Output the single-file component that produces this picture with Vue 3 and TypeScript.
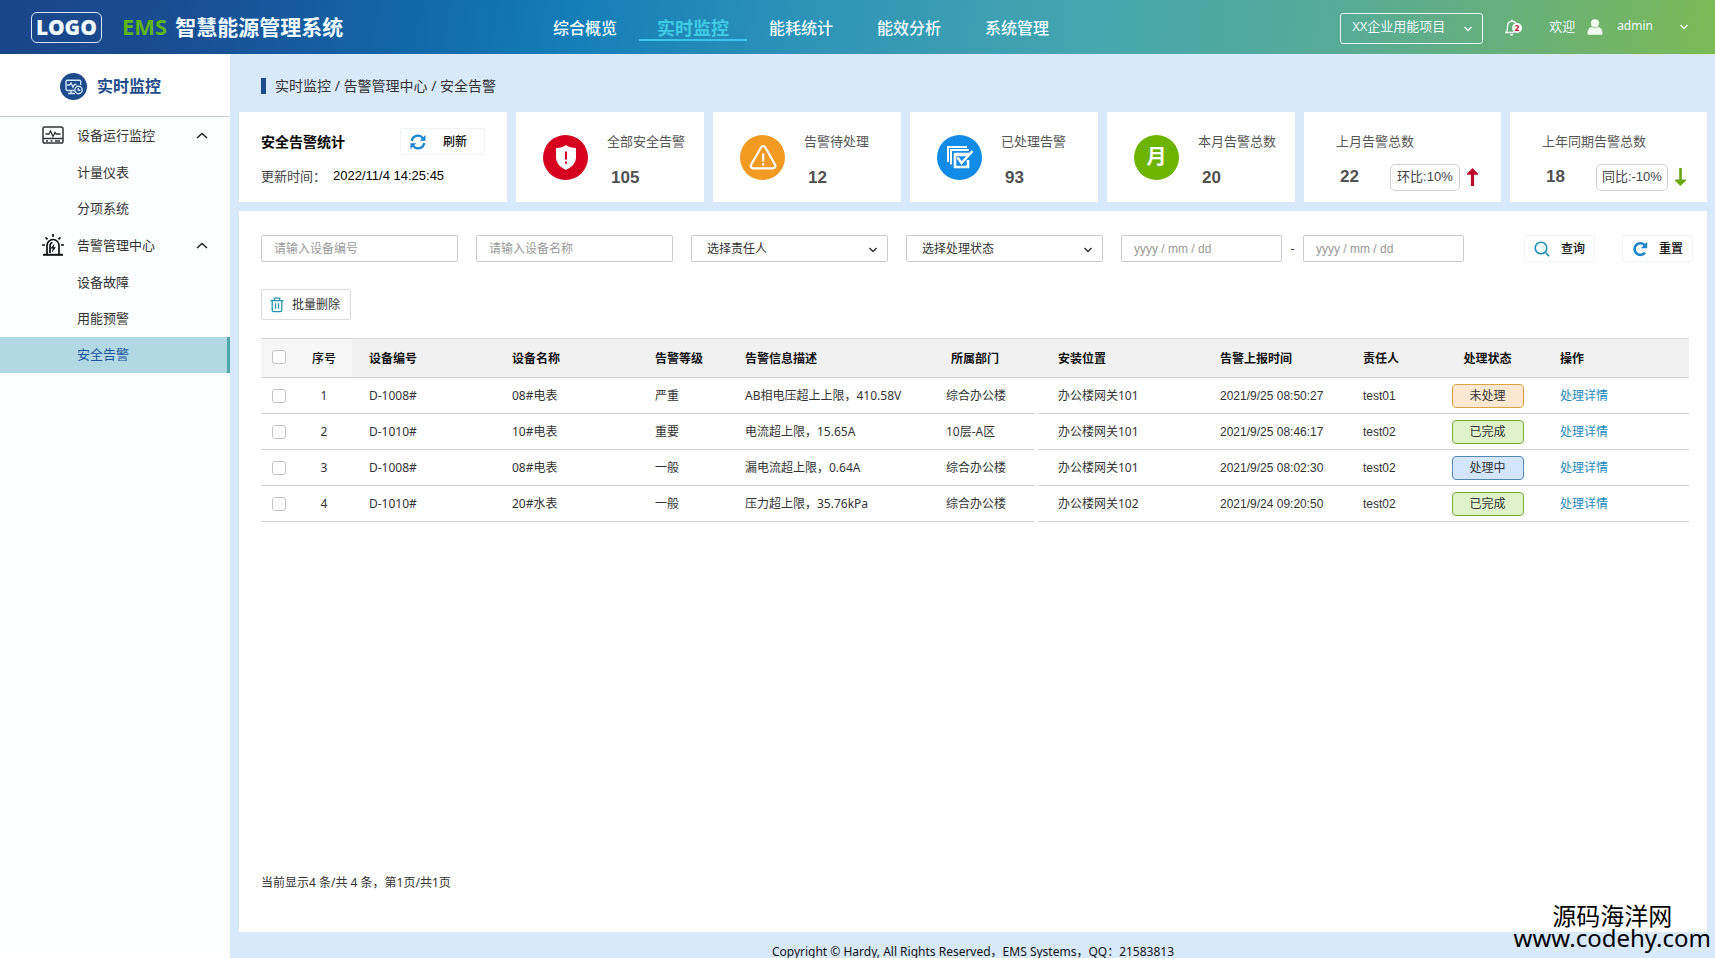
<script setup lang="ts">
import { ref, computed } from 'vue'

interface MenuGroup { key: string; title: string; items: string[] }
interface StatCard { icon: 'shield' | 'warn' | 'done' | 'month'; label: string; value: number; color: string }
interface CompareCard { label: string; value: number; tag: string; up: boolean }
interface AlarmRow {
  id: number; code: string; name: string; level: string; desc: string; dept: string
  place: string; time: string; owner: string; status: string; tone: 'pending' | 'done' | 'doing'
}

const navItems: string[] = ['综合概览', '实时监控', '能耗统计', '能效分析', '系统管理']
const activeNav = ref('实时监控')

const menu: MenuGroup[] = [
  { key: 'device', title: '设备运行监控', items: ['计量仪表', '分项系统'] },
  { key: 'alarm', title: '告警管理中心', items: ['设备故障', '用能预警', '安全告警'] },
]
const opened = ref<Record<string, boolean>>({ device: true, alarm: true })
const activeItem = ref('安全告警')

const stats: StatCard[] = [
  { icon: 'shield', label: '全部安全告警', value: 105, color: 'red' },
  { icon: 'warn', label: '告警待处理', value: 12, color: 'orange' },
  { icon: 'done', label: '已处理告警', value: 93, color: 'blue' },
  { icon: 'month', label: '本月告警总数', value: 20, color: 'green' },
]
const compares: CompareCard[] = [
  { label: '上月告警总数', value: 22, tag: '环比:10%', up: true },
  { label: '上年同期告警总数', value: 18, tag: '同比:-10%', up: false },
]

const rows: AlarmRow[] = [
  { id: 1, code: 'D-1008#', name: '08#电表', level: '严重', desc: 'AB相电压超上上限，410.58V', dept: '综合办公楼', place: '办公楼网关101', time: '2021/9/25 08:50:27', owner: 'test01', status: '未处理', tone: 'pending' },
  { id: 2, code: 'D-1010#', name: '10#电表', level: '重要', desc: '电流超上限，15.65A', dept: '10层-A区', place: '办公楼网关101', time: '2021/9/25 08:46:17', owner: 'test02', status: '已完成', tone: 'done' },
  { id: 3, code: 'D-1008#', name: '08#电表', level: '一般', desc: '漏电流超上限，0.64A', dept: '综合办公楼', place: '办公楼网关101', time: '2021/9/25 08:02:30', owner: 'test02', status: '处理中', tone: 'doing' },
  { id: 4, code: 'D-1010#', name: '20#水表', level: '一般', desc: '压力超上限，35.76kPa', dept: '综合办公楼', place: '办公楼网关102', time: '2021/9/24 09:20:50', owner: 'test02', status: '已完成', tone: 'done' },
]
const selected = ref<number[]>([])
const allSelected = computed<boolean>({
  get: () => selected.value.length === rows.length,
  set: (on) => { selected.value = on ? rows.map((r) => r.id) : [] },
})

const filters = ref({ code: '', name: '', owner: '', status: '', from: '', to: '' })
function resetFilters(): void {
  filters.value = { code: '', name: '', owner: '', status: '', from: '', to: '' }
}
</script>

<template>
  <div class="page">
    <header class="topbar">
      <div class="brand">
        <span class="logo">LOGO</span>
        <h1 class="brand-name"><span class="ems">EMS</span>智慧能源管理系统</h1>
      </div>
      <nav class="nav">
        <a v-for="n in navItems" :key="n" href="#" class="nav-link" :class="{ active: n === activeNav }" @click.prevent="activeNav = n">{{ n }}</a>
      </nav>
      <div class="tools">
        <div class="project">
          <select aria-label="项目">
            <option>XX企业用能项目</option>
          </select>
          <svg class="caret" viewBox="0 0 10 6"><path d="M1.500 1l3.500 3.500L8.500 1" /></svg>
        </div>
        <button type="button" class="bell" aria-label="通知">
          <svg viewBox="0 0 16 18"><path d="M1 14.500h9.500M2.500 14.500c1-1.500 1-3 1-6C3.500 5 5.300 3.300 8 3.300s4.500 1.700 4.500 5M8 3.300V1.500M6 16.800h3" /></svg>
          <span class="bell-count">2</span>
        </button>
        <span class="welcome">欢迎</span>
        <svg class="avatar" viewBox="0 0 16 16"><circle cx="8" cy="4.300" r="4.100" /><path d="M.5 14.500c0-4 2-6.300 4.700-6.500 1.700 1.200 3.900 1.200 5.600 0 2.700.2 4.700 2.500 4.700 6.500 0 .9-.7 1.300-1.500 1.300H2c-.8 0-1.500-.4-1.500-1.300z" /></svg>
        <button type="button" class="user">
          <span>admin</span>
          <svg class="user-caret" viewBox="0 0 10 6"><path d="M1.500 1l3.500 3.500L8.500 1" /></svg>
        </button>
      </div>
    </header>

    <div class="body">
      <aside class="side">
        <div class="side-head">
          <svg class="side-icon" viewBox="0 0 27 27">
            <circle cx="13.500" cy="13.500" r="13.500" fill="#1d4b8b" />
            <g fill="none" stroke="#cfe6fa" stroke-width="1.400">
              <path d="M14 17.500H7.500a1.500 1.500 0 0 1-1.500-1.500V8.700a1.500 1.500 0 0 1 1.500-1.500h11.700a1.500 1.500 0 0 1 1.500 1.500V12" />
              <path d="M6.500 12h3l1.500-2 2 4 1.500-2.500h2M8 20.500h7M11 17.500v3" />
              <circle cx="18.500" cy="17" r="3.700" /><path d="M18.300 15v2.300h2" />
            </g>
          </svg>
          <h2>实时监控</h2>
        </div>
        <div v-for="g in menu" :key="g.key">
          <button type="button" class="group" :aria-expanded="opened[g.key]" @click="opened[g.key] = !opened[g.key]">
            <svg v-if="g.key === 'device'" class="group-icon" viewBox="0 0 22 22">
              <g fill="none" stroke="#333" stroke-width="1.500">
                <rect x="1" y="3" width="20" height="16" rx="1.800" />
                <path d="M1 14.500h20" /><path d="M3.500 10H7l1.500-3 2.500 5.500 2-4L14.200 10h4.300" stroke-width="1.300" />
              </g>
              <path d="M4 16.200h2v1.600H4zM8.500 16.200h2v1.600h-2zM13 16.200h5v1.600h-5z" fill="#333" />
            </svg>
            <svg v-else class="group-icon" viewBox="0 0 22 22">
              <g fill="none" stroke="#111" stroke-width="1.700">
                <path d="M5 20V11.500a6 6 0 0 1 12 0V20M8 19v-7.500a3.200 3.200 0 0 1 2.500-3" /><path d="M1 20.800h20" stroke-width="2" />
                <path d="M11 0v3M3.500 3.300l2 2M18.500 3.300l-2 2M0 11h3M19 11h3" />
              </g>
              <path d="M12.500 9.500l-4 5h2.300l-1 4 4.200-5.300h-2.300z" fill="#111" />
            </svg>
            <span class="group-title">{{ g.title }}</span>
            <svg class="fold" :class="{ closed: !opened[g.key] }" viewBox="0 0 12 7"><path d="M1 6l5-4.500L11 6" /></svg>
          </button>
          <template v-if="opened[g.key]">
            <a v-for="it in g.items" :key="it" href="#" class="item" :class="{ current: it === activeItem }" @click.prevent="activeItem = it">{{ it }}</a>
          </template>
        </div>
      </aside>

      <main class="main">
        <div class="crumbs">实时监控 / 告警管理中心 / 安全告警</div>

        <section class="cards">
          <div class="card summary">
            <div class="summary-top">
              <h3>安全告警统计</h3>
              <button type="button" class="btn refresh">
                <svg viewBox="0 0 16 16" class="btn-icon"><g fill="none" stroke="#1a86d0" stroke-width="2.200"><path d="M1.800 7A6.200 6.200 0 0 1 13 4.300M14.200 9A6.200 6.200 0 0 1 3 11.700" /></g><path d="M15.500 1v5.800H9.700zM.5 15V9.200h5.800z" fill="#1a86d0" /></svg>
                <span>刷新</span>
              </button>
            </div>
            <div class="updated"><span>更新时间：</span><time>2022/11/4 14:25:45</time></div>
          </div>

          <div v-for="s in stats" :key="s.label" class="card stat">
            <span class="disc" :class="s.color">
              <svg v-if="s.icon === 'shield'" viewBox="0 0 44 44"><path d="M22 10c3 2.300 6 3 10 3v9c0 6-4 10-10 13-6-3-10-7-10-13v-9c4 0 7-.7 10-3z" fill="#fff" /><path d="M22 16.500v8M22 26.500v2.300" stroke="#d3001f" stroke-width="2" /></svg>
              <svg v-else-if="s.icon === 'warn'" viewBox="0 0 44 44"><g fill="none" stroke="#fff" stroke-width="2.200" stroke-linejoin="round"><path d="M20 12.500a2.500 2.500 0 0 1 4.400 0l9.700 17.200a2.500 2.500 0 0 1-2.200 3.700H12.300a2.500 2.500 0 0 1-2.200-3.700z" /><path d="M22.200 18.500v8M22.200 28.300v2.200" /></g></svg>
              <svg v-else-if="s.icon === 'done'" viewBox="0 0 44 44"><g fill="none" stroke="#fff" stroke-width="2"><path d="M10 27V12h19M13 29.500V15h18" /><path d="M17 29V18.500h14" stroke-width="1.500" /><path d="M31 20H17v12h13v-7" stroke-width="2.600" /><path d="M19.500 22.500l4 5.500L34.500 16" stroke-width="2.400" /></g></svg>
              <span v-else>月</span>
            </span>
            <div class="figures">
              <span class="label">{{ s.label }}</span>
              <strong>{{ s.value }}</strong>
            </div>
          </div>

          <div v-for="c in compares" :key="c.label" class="card compare">
            <div class="figures">
              <span class="label">{{ c.label }}</span>
              <div class="compare-row">
                <strong>{{ c.value }}</strong>
                <span class="ratio">{{ c.tag }}</span>
                <svg v-if="c.up" class="arrow" viewBox="0 0 11 18"><path d="M5.500 0L11 5.500v1.300H7.100V18H3.900V6.800H0V5.500z" fill="#bd0a2c" /></svg>
                <svg v-else class="arrow" viewBox="0 0 11 18"><path d="M5.500 18L0 12.800v-1.300h4.200V0h2.600v11.500H11v1.300z" fill="#69a812" /></svg>
              </div>
            </div>
          </div>
        </section>

        <section class="panel">
          <form class="filters" @submit.prevent>
            <input v-model="filters.code" class="field" type="text" placeholder="请输入设备编号" aria-label="设备编号">
            <input v-model="filters.name" class="field" type="text" placeholder="请输入设备名称" aria-label="设备名称">
            <div class="pick">
              <select v-model="filters.owner" aria-label="责任人"><option value="">选择责任人</option><option>test01</option><option>test02</option></select>
              <svg class="caret" viewBox="0 0 10 6"><path d="M1.500 1l3.500 3.500L8.500 1" /></svg>
            </div>
            <div class="pick">
              <select v-model="filters.status" aria-label="处理状态"><option value="">选择处理状态</option><option>未处理</option><option>处理中</option><option>已完成</option></select>
              <svg class="caret" viewBox="0 0 10 6"><path d="M1.500 1l3.500 3.500L8.500 1" /></svg>
            </div>
            <div class="range">
              <input v-model="filters.from" class="field" type="text" placeholder="yyyy / mm / dd" aria-label="开始日期">
              <span class="dash">-</span>
              <input v-model="filters.to" class="field" type="text" placeholder="yyyy / mm / dd" aria-label="结束日期">
            </div>
            <div class="actions">
              <button type="submit" class="btn">
                <svg viewBox="0 0 16 16" class="btn-icon"><g fill="none" stroke="#2190b8" stroke-width="1.600"><circle cx="7" cy="7" r="5.800" /><path d="M11.200 11.200l4 4" /></g></svg>
                <span>查询</span>
              </button>
              <button type="button" class="btn" @click="resetFilters">
                <svg viewBox="0 0 16 16" class="btn-icon"><path d="M13 11.500A5.800 5.800 0 1 1 12.500 4" fill="none" stroke="#1d86c8" stroke-width="2.600" /><path d="M15.200.8v6.400H8.800z" fill="#1d86c8" /></svg>
                <span>重置</span>
              </button>
            </div>
          </form>

          <button type="button" class="bulk">
            <svg viewBox="0 0 14 16"><g fill="none" stroke="#2396ac" stroke-width="1.300"><path d="M.5 3.600h13M4.300 3.300V1.200h5.400v2.100M2.200 3.600V13a1.700 1.700 0 0 0 1.700 1.700h6.200a1.700 1.700 0 0 0 1.700-1.700V3.600M5.500 6.300v5.500M8.500 6.300v5.500" /></g></svg>
            <span>批量删除</span>
          </button>

          <table>
            <colgroup>
              <col class="w-check"><col class="w-no"><col class="w-m"><col class="w-m"><col class="w-s"><col class="w-desc">
              <col class="w-dept"><col class="w-place"><col class="w-m"><col class="w-s"><col class="w-status"><col>
            </colgroup>
            <thead>
              <tr>
                <th class="check"><input v-model="allSelected" type="checkbox" aria-label="全选"></th>
                <th class="no">序号</th>
                <th>设备编号</th>
                <th>设备名称</th>
                <th>告警等级</th>
                <th>告警信息描述</th>
                <th class="dept">所属部门</th>
                <th class="place">安装位置</th>
                <th>告警上报时间</th>
                <th>责任人</th>
                <th class="status">处理状态</th>
                <th>操作</th>
              </tr>
            </thead>
            <tbody>
              <tr v-for="r in rows" :key="r.id">
                <td class="check"><input v-model="selected" type="checkbox" :value="r.id" :aria-label="'选择第' + r.id + '行'"></td>
                <td class="no">{{ r.id }}</td>
                <td>{{ r.code }}</td>
                <td>{{ r.name }}</td>
                <td>{{ r.level }}</td>
                <td>{{ r.desc }}</td>
                <td class="dept">{{ r.dept }}</td>
                <td class="place">{{ r.place }}</td>
                <td class="latin">{{ r.time }}</td>
                <td class="latin">{{ r.owner }}</td>
                <td class="status"><span class="tag" :class="r.tone">{{ r.status }}</span></td>
                <td><a href="#" class="detail" @click.prevent>处理详情</a></td>
              </tr>
            </tbody>
          </table>

          <p class="paging">当前显示4 条/共 4 条，第1页/共1页</p>
        </section>

        <footer class="foot">Copyright © Hardy, All Rights Reserved，EMS Systems，QQ：21583813</footer>
      </main>
    </div>

    <div class="mark"><span>源码海洋网</span><span>www.codehy.com</span></div>
  </div>
</template>

<style>
body {
  margin: 0;
}
</style>

<style scoped>
* {
  box-sizing: border-box;
}
.page {
  position: relative;
  display: flex;
  flex-direction: column;
  min-height: 100vh;
  font-family: "Noto Sans", "Noto Sans CJK SC", sans-serif;
  font-size: 12px;
  line-height: 16px;
  color: #333;
  overflow: hidden;
}
h1, h2, h3, p {
  margin: 0;
}
button, input, select {
  font: inherit;
  color: inherit;
}
button {
  padding: 0;
  border: 0;
  background: none;
  cursor: pointer;
}
a {
  text-decoration: none;
}

.topbar {
  display: flex;
  align-items: center;
  height: 54px;
  color: #eefaff;
  background: linear-gradient(97deg, #1a4588 0%, #1a4c92 10%, #1268a8 24%, #137db8 33%, #2e93b7 47%, #46a7ae 64%, #57ab97 78%, #69b078 89%, #7cba55 100%);
}
.brand {
  display: flex;
  align-items: center;
  gap: 20px;
  width: 531px;
  padding-left: 31px;
}
.logo {
  width: 71px;
  height: 31px;
  border: 1px solid #d4e6fa;
  border-radius: 6px;
  font-family: "Noto Sans", sans-serif;
  font-size: 21px;
  font-weight: 900;
  line-height: 28px;
  text-align: center;
}
.brand-name {
  display: flex;
  gap: 8px;
  font-size: 21px;
  line-height: 30px;
  font-weight: 700;
}
.ems {
  font-size: 22px;
  line-height: 28px;
  color: #5db516;
}
.nav {
  display: flex;
}
.nav-link {
  display: flex;
  align-items: center;
  justify-content: center;
  width: 108px;
  height: 28px;
  padding-top: 4px;
  border-bottom: 2px solid transparent;
  font-size: 16px;
  font-weight: 500;
  color: #eefaff;
}
.nav-link.active {
  border-color: #3cc4ea;
  font-size: 18px;
  font-weight: 700;
  color: #3fcbe4;
}
.tools {
  display: flex;
  align-items: center;
  margin-left: auto;
  padding-right: 26px;
}
.project {
  position: relative;
  margin: 2px 21px 0 0;
}
.project select {
  display: block;
  width: 143px;
  height: 31px;
  padding: 0 24px 4px 11px;
  border: 1px solid #e6f6f2;
  border-radius: 3px;
  background: transparent;
  font-size: 13px;
  appearance: none;
}
.project option {
  color: #333;
}
.caret {
  position: absolute;
  top: 50%;
  right: 10px;
  width: 10px;
  height: 6px;
  margin-top: -2px;
  pointer-events: none;
}
.caret path, .user-caret path {
  fill: none;
  stroke: currentColor;
  stroke-width: 1.5;
}
.bell {
  position: relative;
  width: 18px;
  height: 18px;
  margin-right: 27px;
}
.bell svg {
  display: block;
  width: 16px;
  height: 18px;
  fill: none;
  stroke: #eefaf4;
  stroke-width: 1.4;
}
.bell-count {
  position: absolute;
  top: 5px;
  right: 0;
  width: 10px;
  height: 10px;
  border-radius: 50%;
  background: #fff;
  color: #c00a2e;
  font-size: 8px;
  font-weight: 700;
  line-height: 10px;
}
.welcome {
  padding-bottom: 2px;
  margin-right: 12px;
  font-size: 13px;
}
.avatar {
  width: 16px;
  height: 16px;
  margin-right: 14px;
  fill: #f2fbf0;
}
.user {
  display: flex;
  align-items: center;
  gap: 26px;
}
.user span {
  padding-bottom: 2px;
}
.user-caret {
  width: 10px;
  height: 6px;
}

.body {
  display: flex;
  flex: 1;
}
.side {
  width: 230px;
  flex: none;
  background: #fcfeff;
}
.side-head {
  display: flex;
  align-items: center;
  gap: 10px;
  height: 63px;
  padding: 2px 0 0 60px;
  border-bottom: 1px solid #ccc;
  background: #fff;
}
.side-icon {
  width: 27px;
  height: 27px;
}
.side-head h2 {
  font-size: 16px;
  font-weight: 700;
  color: #1d4b8b;
}
.group {
  display: flex;
  align-items: center;
  gap: 13px;
  width: 100%;
  height: 38px;
  padding: 0 22px 2px 42px;
  font-size: 13px;
  text-align: left;
}
.group-icon {
  width: 22px;
  height: 22px;
}
.group-title {
  flex: 1;
}
.fold {
  width: 12px;
  height: 7px;
  fill: none;
  stroke: #222;
  stroke-width: 1.5;
}
.fold.closed {
  transform: rotate(180deg);
}
.item {
  display: flex;
  align-items: center;
  height: 36px;
  padding: 0 0 3px 77px;
  border-right: 3px solid transparent;
  font-size: 13px;
  color: #333;
}
.item.current {
  border-color: #4ca8a8;
  background: #b2d8e3;
  color: #1c559c;
}

.main {
  display: flex;
  flex: 1;
  flex-direction: column;
  min-width: 0;
  padding: 0 8px 0 9px;
  background: #d9e9fc;
}
.crumbs {
  display: flex;
  align-items: center;
  gap: 9px;
  height: 58px;
  padding: 6px 0 0 22px;
  font-size: 14px;
}
.crumbs::before {
  content: "";
  width: 5px;
  height: 16px;
  background: #1d4b8b;
}

.cards {
  display: grid;
  grid-template-columns: 268fr repeat(4, 188fr) repeat(2, 197fr);
  gap: 9px;
}
.card {
  height: 90px;
  background: #fff;
}
.summary {
  padding: 16px 22px 0;
}
.summary-top {
  display: flex;
  align-items: center;
  justify-content: space-between;
}
.summary h3 {
  font-size: 14px;
  font-weight: 700;
  color: #000;
}
.btn {
  display: flex;
  align-items: center;
  gap: 11px;
  height: 27px;
  padding: 0 9px;
  border: 1px solid #f2f5f8;
  border-radius: 2px;
  color: #111;
  font-weight: 500;
}
.btn-icon {
  width: 16px;
  height: 16px;
}
.refresh {
  gap: 17px;
  padding-right: 17px;
}
.updated {
  display: flex;
  gap: 7px;
  margin-top: 13px;
  font-size: 13px;
  color: #444;
}
.updated time {
  font-family: "Liberation Sans", sans-serif;
  color: #000;
}
.stat {
  display: flex;
  align-items: center;
  gap: 19px;
  padding-left: 27px;
}
.disc {
  display: flex;
  align-items: center;
  justify-content: center;
  width: 45px;
  height: 45px;
  flex: none;
  border-radius: 50%;
  color: #fff;
  font-size: 20px;
  font-weight: 700;
}
.disc svg {
  width: 44px;
  height: 44px;
}
.red { background: #d6001f; }
.orange { background: #f39a22; }
.blue { background: #128be6; }
.green { background: #6cb400; }
.figures {
  display: flex;
  flex-direction: column;
  gap: 17px;
  padding-top: 5px;
  white-space: nowrap;
}
.label {
  font-size: 13px;
  line-height: 20px;
  color: #555;
}
.figures strong {
  padding-left: 4px;
  font-family: "Liberation Sans", sans-serif;
  font-size: 17px;
  line-height: 20px;
  color: #505050;
}
.compare {
  display: flex;
  align-items: center;
  padding-left: 32px;
}
.compare .figures {
  gap: 13px;
  padding-top: 7px;
}
.compare-row {
  display: flex;
  align-items: center;
}
.ratio {
  min-width: 70px;
  height: 27px;
  margin: 0 7px 0 31px;
  padding: 0 5px;
  border: 1px solid #d4d4d4;
  border-radius: 5px;
  font-family: "Liberation Sans", "Noto Sans CJK SC", sans-serif;
  font-size: 13px;
  line-height: 24px;
  text-align: center;
  color: #444;
}
.arrow {
  width: 11px;
  height: 18px;
}

.panel {
  display: flex;
  flex: 1;
  flex-direction: column;
  align-items: flex-start;
  margin-top: 9px;
  padding: 24px 18px 41px 22px;
  background: #fff;
}
.filters {
  display: flex;
  gap: 18px;
  width: 100%;
}
.field, .pick select {
  display: block;
  width: 197px;
  height: 27px;
  padding: 0 12px;
  border: 1px solid #ccc;
  border-radius: 2px;
  background: #fff;
}
.field::placeholder {
  color: #999;
  opacity: 1;
}
.pick {
  position: relative;
}
.pick select {
  padding: 0 24px 0 15px;
  appearance: none;
}
.range {
  display: flex;
  align-items: center;
  font-family: "Liberation Sans", sans-serif;
}
.range .field {
  width: 161px;
}
.dash {
  width: 21px;
  text-align: center;
}
.actions {
  display: flex;
  gap: 27px;
  margin-left: auto;
  margin-right: -4px;
}
.bulk {
  display: flex;
  align-items: center;
  gap: 8px;
  height: 31px;
  margin: 27px 0 18px;
  padding: 0 10px 0 8px;
  border: 1px solid #ddd;
  border-radius: 2px;
}
.bulk svg {
  width: 14px;
  height: 16px;
}

table {
  width: 100%;
  table-layout: fixed;
  border-collapse: separate;
  border-spacing: 0;
}
.w-check { width: 35px; }
.w-no { width: 56px; }
.w-m { width: 143px; }
.w-s { width: 90px; }
.w-desc { width: 201px; }
.w-dept { width: 109px; }
.w-place { width: 165px; }
.w-status { width: 107px; }
th, td {
  height: 36px;
  padding: 1px 0 0 17px;
  border-bottom: 1px solid #d2d2d2;
  text-align: left;
  white-space: nowrap;
}
th {
  height: 40px;
  padding-top: 2px;
  border-top: 1px solid #d8d8d8;
  background: #f1f1f1;
  color: #111;
  font-weight: 700;
}
.check {
  padding: 0 0 0 11px;
}
.no {
  padding-left: 0;
  text-align: center;
}
th.check, th.no {
  background: #f6f6f6;
}
th.check {
  padding-bottom: 3px;
}
th.no {
  font-weight: 500;
}
.dept {
  position: relative;
}
th.dept {
  padding-right: 34px;
  text-align: center;
}
td.dept::after {
  content: "";
  position: absolute;
  right: 0;
  bottom: -1px;
  width: 3px;
  height: 1px;
  background: #fff;
}
.place {
  padding-left: 20px;
}
.status {
  padding-left: 0;
  padding-right: 4px;
  text-align: center;
}
td.status {
  padding-top: 0;
}
.latin {
  padding-top: 0;
  font-family: "Liberation Sans", sans-serif;
}
input[type="checkbox"] {
  display: block;
  width: 14px;
  height: 14px;
  margin: 0;
  border: 1px solid #c4c4c4;
  border-radius: 3px;
  background: #fff;
  appearance: none;
}
input[type="checkbox"]:checked {
  background: #2190b8;
}
.tag {
  display: inline-block;
  width: 72px;
  height: 24px;
  border: 1px solid;
  border-radius: 4px;
  line-height: 22px;
  vertical-align: middle;
}
.pending { border-color: #dfa545; background: #fee8d2; }
.done { border-color: #7cab35; background: #dff2c9; }
.doing { border-color: #5089b8; background: #d3e6fc; }
.detail {
  color: #2088bb;
}
.paging {
  margin-top: auto;
}
.foot {
  padding-top: 13px;
  font-size: 12px;
  line-height: 13px;
  text-align: center;
  color: #111;
}
.mark {
  position: absolute;
  right: 4px;
  bottom: 9px;
  display: flex;
  flex-direction: column;
  align-items: center;
  font-size: 24px;
  line-height: 22px;
  color: #000;
  pointer-events: none;
}
</style>
